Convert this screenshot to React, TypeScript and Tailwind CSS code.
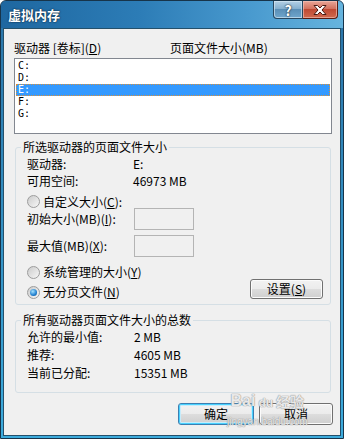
import type { ReactNode } from 'react'

const font = "font-['Noto_Sans_CJK_SC','Noto_Sans',sans-serif]"

function Radio({ checked }: { checked?: boolean }) {
  return (
    <span className="w-[13px] h-[13px] shrink-0 rounded-full border border-[#9c9c9c] bg-[linear-gradient(135deg,#cbcbcb,#f7f7f7)] flex items-center justify-center">
      {checked && (
        <span className="w-[7px] h-[7px] rounded-full bg-[radial-gradient(circle_at_40%_35%,#a6e3ff,#1f7fd0_60%,#0c4c88)]" />
      )}
    </span>
  )
}

function Button({ children, primary, w }: { children: ReactNode; primary?: boolean; w: string }) {
  return (
    <div
      className={`${w} h-full rounded-[3px] border flex items-center justify-center bg-[linear-gradient(to_bottom,#f2f2f2_0%,#ebebeb_50%,#dddddd_50%,#cfcfcf_100%)] ${
        primary
          ? 'border-[#3c7fb1] shadow-[inset_0_0_0_1px_#48d1ff,inset_0_0_0_2px_#c6ecfb]'
          : 'border-[#707070] shadow-[inset_0_0_0_1px_#fbfbfb]'
      }`}
    >
      {children}
    </div>
  )
}

function TextBox() {
  return <div className="w-[60px] h-[22px] border border-[#b4b4b4] bg-[#f0f0f0]" />
}

function Row({ label, value, h }: { label: ReactNode; value: string; h: string }) {
  return (
    <div className={`flex items-center ${h}`}>
      <span className="w-[107px] shrink-0">{label}</span>
      <span>{value}</span>
    </div>
  )
}

export default function App() {
  const drives = ['C:', 'D:', 'E:', 'F:', 'G:']

  return (
    <div
      className={`relative w-[344px] h-[439px] flex flex-col rounded-t-[6px] border border-[#17344a] bg-[linear-gradient(to_bottom,#2a74a8,#3cabdd)] ${font} text-[12px] leading-[14px] text-black`}
    >
      {/* title bar */}
      <div className="h-[27px] shrink-0 flex items-start justify-between rounded-t-[5px] bg-[linear-gradient(to_right,#1e67a0,#2c7cb6_40%,#4899ce_72%,#66b4de)]">
        <div className="h-full flex items-center pl-[7px] text-[13px] font-bold text-white [text-shadow:0_0_2px_#0a2740,0_0_1px_#0a2740]">
          虚拟内存
        </div>
        <div className="flex mr-[5px]">
          <div className="w-[30px] h-[18px] rounded-bl-[4px] border border-t-0 border-[#28475f] bg-[linear-gradient(to_bottom,#b4d1e6,#86b0cf_45%,#5a8fb7_50%,#6fa6cc)] shadow-[inset_0_0_0_1px_#d7e9f5aa] flex items-center justify-center text-[14px] font-bold leading-none text-white [text-shadow:0_0_1px_#1d2d3a,0_0_2px_#1d2d3a]">
            ?
          </div>
          <div className="w-[35px] h-[18px] rounded-br-[4px] border border-t-0 border-l-0 border-[#5a1c12] bg-[linear-gradient(to_bottom,#e9a697,#d3725f_45%,#c04a33_50%,#d06a4f)] shadow-[inset_0_0_0_1px_#f3c7bc99] flex items-center justify-center">
            <svg width="14" height="10" viewBox="0 0 14 10">
              <polygon
                points="1,0.5 4.5,0.5 7,3 9.5,0.5 13,0.5 9,5 13,9.5 9.5,9.5 7,7 4.5,9.5 1,9.5 5,5"
                fill="#ffffff"
                stroke="#4a1a12"
                strokeWidth="1"
                strokeLinejoin="round"
              />
            </svg>
          </div>
        </div>
      </div>

      {/* content */}
      <div className="flex-1 mx-[2px] mb-[2px] border border-[#24506b] bg-[#f0f0f0] flex flex-col">
        <div className="flex h-[14px] mt-[12px] pl-[10px]">
          <span className="w-[156px]">
            驱动器 [卷标](<u>D</u>)
          </span>
          <span>页面文件大小(MB)</span>
        </div>

        <div className="ml-[10px] mt-[3px] w-[318px] h-[76px] border border-[#828790] bg-white p-px">
          {drives.map((d) => (
            <div
              key={d}
              className={`h-[12px] flex items-center font-['DejaVu_Sans_Mono',monospace] text-[10px] leading-[10px] pl-[2px] ${
                d === 'E:'
                  ? 'bg-[#3399ff] text-white outline-1 outline-dotted outline-[#d8903c] -outline-offset-1'
                  : ''
              }`}
            >
              {d}
            </div>
          ))}
        </div>

        <fieldset className="mt-[7px] ml-[11px] w-[316px] border border-[#d5dfe5] rounded-[3px]">
          <legend className="ml-[5px] px-[2px] leading-[12px]">所选驱动器的页面文件大小</legend>
          <div className="pl-[11px] pr-[7px] pt-[2px] pb-[5px] flex flex-col">
            <div className="flex items-center h-[17px]">
              <span className="w-[106px]">驱动器:</span>
              <span>E:</span>
            </div>
            <div className="flex items-center h-[17px]">
              <span className="w-[106px]">可用空间:</span>
              <span>46973 MB</span>
            </div>
            <div className="flex items-center gap-[3px] h-[13px] mt-[6px]">
              <Radio />
              <span>
                自定义大小(<u>C</u>):
              </span>
            </div>
            <div className="flex items-center h-[22px]">
              <span className="w-[107px]">
                初始大小(MB)(<u>I</u>):
              </span>
              <TextBox />
            </div>
            <div className="flex items-center h-[22px] mt-[5px]">
              <span className="w-[107px]">
                最大值(MB)(<u>X</u>):
              </span>
              <TextBox />
            </div>
            <div className="flex items-center gap-[3px] h-[14px] mt-[8px]">
              <Radio />
              <span>
                系统管理的大小(<u>Y</u>)
              </span>
            </div>
            <div className="flex items-start justify-between h-[20px]">
              <div className="flex items-center gap-[3px] h-[14px] mt-[6px]">
                <Radio checked />
                <span>
                  无分页文件(<u>N</u>)
                </span>
              </div>
              <Button w="w-[73px]">
                设置(<u>S</u>)
              </Button>
            </div>
          </div>
        </fieldset>

        <fieldset className="mt-[9px] ml-[11px] w-[316px] border border-[#d5dfe5] rounded-[3px]">
          <legend className="ml-[5px] px-[2px] leading-[12px]">所有驱动器页面文件大小的总数</legend>
          <div className="pl-[11px] pt-[2px] pb-[10px] flex flex-col">
            <Row h="h-[18px]" label="允许的最小值:" value="2 MB" />
            <Row h="h-[18px]" label="推荐:" value="4605 MB" />
            <Row h="h-[18px]" label="当前已分配:" value="15351 MB" />
          </div>
        </fieldset>

        <div className="flex justify-end gap-[5px] pr-[7px] mt-[10px] h-[22px]">
          <Button primary w="w-[76px]">
            确定
          </Button>
          <Button w="w-[74px]">取消</Button>
        </div>
      </div>

      {/* watermark */}
      <div className="absolute left-[226px] top-[392px] flex flex-col items-center text-white/80 [text-shadow:0_0_1px_#8a8a8a,0_0_1px_#8a8a8a] pointer-events-none">
        <div className="flex items-end gap-[2px] font-['Liberation_Sans',sans-serif] font-bold text-[16px] leading-[16px]">
          <span>Bai</span>
          <span className="text-[12px] leading-[12px] rounded-[4px] px-[1px]">du</span>
          <span className={`${font} text-[14px] leading-[16px]`}>经验</span>
        </div>
        <span className="font-['Liberation_Sans',sans-serif] text-[10px] leading-[10px] mt-[8px]">jingyan.baidu.com</span>
      </div>
    </div>
  )
}
